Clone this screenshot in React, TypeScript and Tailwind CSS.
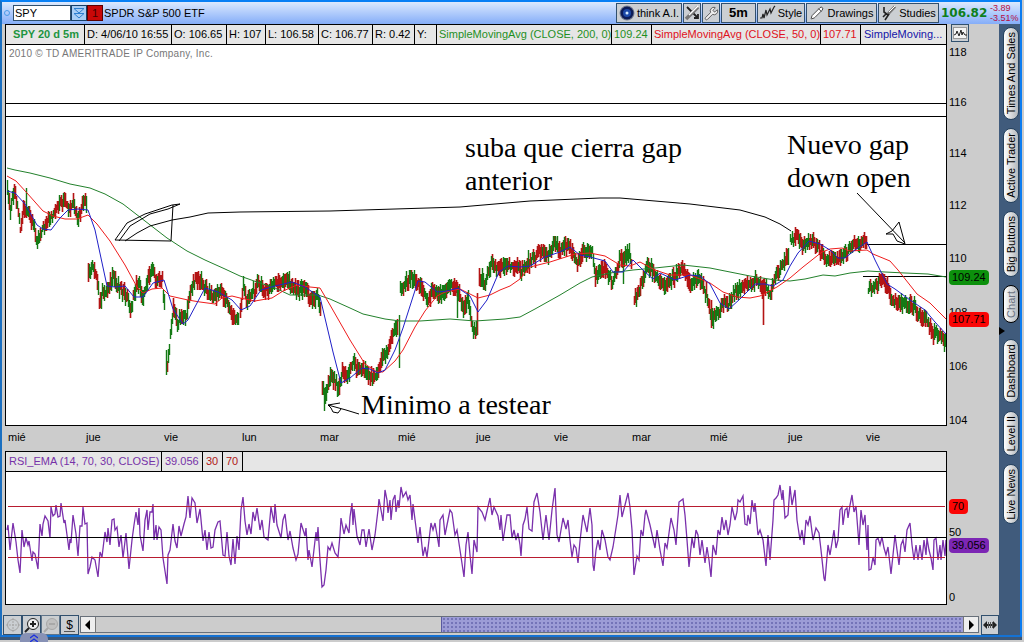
import React from 'react';
import { Pencil, Wrench } from 'lucide-react';

type Point = [number, number];

// Each session is its own list, so the overnight gaps stay open
const SESSIONS: Point[][] = [
  [[7, 191], [10, 208], [14, 189], [17, 205], [20, 228], [23, 210], [30, 217], [37, 241], [42, 229], [50, 220], [57, 206], [65, 200], [68, 211], [73, 204], [78, 219], [85, 200], [87, 208]],
  [[88, 272], [92, 266], [96, 273], [99, 303], [102, 295], [108, 287], [113, 278], [120, 288], [128, 299], [130, 312], [137, 282], [143, 297], [147, 279], [152, 270], [157, 280], [162, 281], [165, 316]],
  [[167, 366], [170, 338], [173, 306], [177, 323], [182, 314], [185, 319], [190, 293], [195, 278], [202, 284], [212, 297], [220, 290], [227, 303], [235, 321], [239, 316]],
  [[240, 312], [243, 287], [247, 301], [258, 283], [267, 292], [275, 281], [280, 284], [287, 280], [297, 290], [305, 287], [312, 301], [318, 297], [321, 314]],
  [[322, 388], [325, 396], [330, 375], [334, 380], [338, 387], [342, 371], [347, 377], [353, 362], [360, 370], [373, 377], [378, 370], [383, 357], [390, 343], [398, 322]],
  [[400, 292], [407, 281], [414, 277], [420, 287], [427, 299], [433, 291], [438, 295], [452, 284], [458, 292], [463, 308], [468, 300], [473, 332], [477, 325]],
  [[479, 277], [485, 283], [491, 263], [497, 267], [503, 268], [508, 264], [522, 270], [528, 263], [537, 253], [548, 255], [555, 242], [560, 250], [565, 243], [572, 252], [577, 263], [583, 253], [592, 252], [595, 275], [602, 267], [612, 281], [620, 260], [623, 263], [629, 249], [632, 268]],
  [[634, 299], [638, 294], [647, 265], [655, 275], [664, 286], [673, 277], [682, 267], [690, 286], [697, 277], [702, 283], [707, 297], [711, 315]],
  [[712, 318], [717, 314], [723, 302], [728, 305], [733, 295], [742, 285], [750, 285], [757, 281], [763, 288], [770, 292], [775, 277], [782, 265], [788, 258]],
  [[790, 240], [796, 235], [803, 247], [809, 240], [818, 246], [825, 261], [830, 258], [838, 260], [847, 252], [853, 244], [858, 246], [863, 239], [867, 243]],
  [[868, 291], [873, 287], [881, 279], [887, 287], [892, 300], [900, 305], [910, 304], [920, 315], [928, 322], [933, 335], [938, 333], [946, 343]],
];

// Single prints that stick out far from the body of the session
const SPIKES: { x: number; from: number; to: number; up: boolean }[] = [
  { x: 26, from: 188, to: 215, up: true },
  { x: 324, from: 390, to: 411, up: true },
  { x: 166, from: 350, to: 375, up: true },
  { x: 399, from: 315, to: 368, up: true },
  { x: 457, from: 290, to: 318, up: true },
  { x: 477, from: 293, to: 335, up: false },
  { x: 555, from: 236, to: 248, up: true },
  { x: 595, from: 268, to: 286, up: false },
  { x: 623, from: 258, to: 284, up: true },
  { x: 711, from: 300, to: 328, up: false },
  { x: 763, from: 288, to: 325, up: false },
  { x: 788, from: 248, to: 265, up: true },
];

const SMA_200 = '7,168 15,170 30,173 50,178 70,184 90,188 105,194 123,204 145,221 167,238 187,251 205,260 225,269 240,276 257,282 275,288 290,295 318,295 330,299 350,308 363,314 385,319 400,321 420,321 450,319 475,321 505,319 520,317 535,309 560,295 580,283 592,277 610,273 633,270 655,268 683,265 710,268 730,272 750,276 775,280 790,281 805,279 823,275 835,276 850,273 868,271 885,272 905,273 928,274 946,277';
const SMA_50 = '7,176 16,181 27,193 43,211 53,216 65,219 77,219 88,215 97,224 110,241 125,265 137,287 143,293 152,289 162,288 170,296 188,300 200,302 215,304 222,298 232,296 240,298 255,301 272,298 283,291 297,285 310,287 320,288 330,305 350,340 365,364 377,372 383,372 395,361 403,350 415,327 425,311 437,296 445,292 460,289 478,298 490,295 500,290 510,286 520,279 530,267 550,262 575,254 590,253 605,256 620,265 630,266 640,262 655,270 670,275 690,275 710,283 723,292 737,297 750,298 760,296 777,287 790,278 803,267 822,252 830,249 842,248 850,251 867,250 873,254 890,261 898,270 917,294 930,303 946,319';
const SMA_20 = '7,191 15,193 25,204 37,225 43,229 51,230 60,218 68,210 78,209 88,210 95,230 107,286 115,287 125,286 134,297 143,297 153,283 164,280 173,309 183,324 188,320 205,288 218,292 232,300 241,310 250,306 261,290 275,286 292,282 305,287 320,297 333,352 341,383 350,378 362,368 370,369 378,373 385,370 395,350 403,328 418,281 425,282 437,292 447,291 458,288 470,296 478,312 487,300 499,272 508,266 520,267 530,266 545,257 560,252 570,247 580,255 590,257 605,261 613,272 623,272 633,260 645,272 653,279 660,273 675,280 690,275 700,276 710,284 720,303 729,309 740,299 755,284 765,284 773,286 783,280 790,266 798,253 809,241 820,244 830,250 838,258 845,258 855,250 867,242 875,260 887,284 895,289 910,300 925,310 935,322 946,334';

const RSI = '7,530 8,525 10,550 13,523 16,542 18,560 20,573 22,530 24,547 26,538 28,545 29,541 32,561 33,552 35,554 38,569 40,524 42,536 43,524 45,516 48,521 50,538 51,507 53,516 55,514 56,505 58,517 60,516 61,503 64,523 65,520 69,550 70,539 71,543 73,515 76,534 78,556 80,526 82,526 83,507 85,524 87,523 88,574 90,567 92,557 95,560 98,577 100,552 102,557 105,532 107,542 108,528 110,545 112,520 114,519 115,530 117,527 119,547 121,535 123,558 126,533 129,569 132,540 134,525 136,512 138,525 139,508 140,535 143,551 145,520 147,510 148,530 150,512 152,512 153,504 154,540 156,525 157,540 159,527 161,530 163,558 167,584 168,555 170,550 173,524 175,541 177,548 179,526 181,536 184,524 186,517 188,496 190,518 192,498 195,503 197,523 200,509 203,541 205,530 207,550 209,532 211,548 213,547 215,530 218,522 220,521 223,555 225,556 227,532 229,556 231,565 233,539 235,564 237,536 239,550 241,510 243,497 245,521 247,535 249,524 251,534 253,512 255,521 257,508 260,530 262,520 264,537 268,540 271,507 274,523 275,504 277,525 281,538 283,520 285,514 288,540 290,531 293,548 296,560 298,554 301,523 305,536 306,528 308,560 309,550 312,567 316,532 317,541 318,527 320,560 322,587 324,585 326,570 328,547 330,550 332,543 335,553 338,557 340,535 341,518 344,534 346,525 349,533 350,517 352,503 353,525 354,509 357,536 360,545 362,530 364,530 366,547 369,529 372,550 375,535 378,510 379,499 381,510 383,521 385,490 387,500 388,513 390,500 391,520 393,500 395,495 396,512 398,500 399,508 401,487 403,497 406,492 408,500 410,495 412,520 413,504 418,543 420,527 423,556 425,547 427,557 431,523 433,530 435,523 437,535 439,547 440,520 443,515 445,535 448,520 450,510 452,513 455,535 457,530 460,550 464,577 466,545 468,532 470,555 472,574 474,540 477,552 478,507 482,512 485,520 487,511 490,498 492,515 494,507 498,516 500,530 501,515 503,541 507,515 510,515 512,538 514,530 516,540 518,533 520,545 521,556 523,525 525,519 527,507 529,529 532,531 534,502 537,493 540,512 543,540 546,515 549,540 552,510 555,488 557,535 559,542 563,518 566,529 568,520 570,540 572,557 574,545 576,548 578,563 580,541 583,515 587,532 590,508 592,525 593,565 594,571 596,550 598,540 600,550 602,530 605,540 608,557 610,560 613,547 616,528 618,515 620,495 622,517 625,505 628,493 630,507 632,530 634,575 637,556 639,560 641,530 643,536 645,515 646,510 650,525 655,548 657,530 660,550 663,566 665,543 667,548 671,518 674,530 676,545 679,502 683,499 685,515 687,540 689,567 692,538 694,548 696,530 698,535 700,555 702,540 705,563 707,547 709,560 711,577 713,545 716,555 718,530 720,535 722,517 724,530 726,520 728,535 730,525 732,507 735,520 737,512 738,500 740,502 743,496 745,524 747,525 748,515 750,524 752,500 754,512 755,503 758,535 760,530 763,540 766,566 768,535 770,560 773,520 774,500 776,498 778,495 780,485 782,500 783,490 785,518 788,515 790,486 792,505 795,490 797,520 800,540 802,530 804,545 806,520 808,525 810,516 813,540 816,528 819,533 821,550 824,578 825,581 828,545 830,555 834,530 836,548 838,540 840,510 842,507 843,525 845,510 847,508 848,518 850,505 852,495 854,512 856,506 859,545 861,510 863,525 865,515 867,550 868,525 869,570 871,569 873,557 875,565 876,540 878,538 880,545 882,537 884,548 886,555 888,547 891,574 893,555 895,535 897,550 899,565 901,545 903,540 905,552 907,530 910,523 912,545 914,560 916,545 918,560 920,545 922,560 924,540 926,555 927,538 929,550 931,558 933,570 934,540 936,538 938,560 940,545 941,560 943,540 945,556 946,540';

const noise = (n: number) => {
  const v = Math.sin(n * 12.9898) * 43758.5453;
  return v - Math.floor(v);
};

const buildBars = () => {
  let up = '';
  let down = '';
  SESSIONS.forEach((points) => {
    for (let i = 0; i < points.length - 1; i++) {
      const [x0, y0] = points[i];
      const [x1, y1] = points[i + 1];
      for (let x = x0; x < x1; x++) {
        const y = y0 + ((y1 - y0) * (x - x0)) / (x1 - x0) + (noise(x) - 0.5) * 6;
        const top = Math.round(y - 3 - noise(x + 7) * 7);
        const bottom = Math.round(y + 3 + noise(x + 31) * 7);
        const bar = `M${x + 0.5} ${top}V${bottom}`;
        const rising = y1 < y0 ? noise(x + 3) > 0.42 : noise(x + 3) > 0.66;
        if (rising) up += bar;
        else down += bar;
      }
    }
  });
  SPIKES.forEach((s) => {
    const bar = `M${s.x + 0.5} ${s.from}V${s.to}`;
    if (s.up) up += bar;
    else down += bar;
  });
  return { up, down };
};

const bars = buildBars();

const QUOTE_CELLS = [
  { text: 'SPY 20 d 5m', style: 'w-[79px] text-center font-bold text-[#1d9440]' },
  { text: 'D: 4/06/10 16:55', style: 'w-[87px] text-black' },
  { text: 'O: 106.65', style: 'w-[55px] text-black' },
  { text: 'H: 107', style: 'w-[39px] text-black' },
  { text: 'L: 106.58', style: 'w-[53px] text-black' },
  { text: 'C: 106.77', style: 'w-[54px] text-black' },
  { text: 'R: 0.42', style: 'w-[42px] text-black' },
  { text: 'Y:', style: 'w-[22px] text-black' },
  { text: 'SimpleMovingAvg (CLOSE, 200, 0)', style: 'w-[175px] text-[#1f8f1f]' },
  { text: '109.24', style: 'w-[40px] text-[#1f8f1f]' },
  { text: 'SimpleMovingAvg (CLOSE, 50, 0)', style: 'w-[169px] text-[#e01020]' },
  { text: '107.71', style: 'w-[40px] text-[#e01020]' },
];

// gap is the share of the log scale down to the next tick
const PRICE_TICKS = [
  { label: '118', gap: 50 },
  { label: '116', gap: 51 },
  { label: '114', gap: 52 },
  { label: '112', gap: 53 },
  { label: '110', gap: 54 },
  { label: '108', gap: 54 },
  { label: '106', gap: 56 },
];

const DAYS = ['mié', 'jue', 'vie', 'lun', 'mar', 'mié', 'jue', 'vie', 'mar', 'mié', 'jue', 'vie'];

const UPPER_TABS = [
  { label: 'Times And Sales', style: 'h-[93px]' },
  { label: 'Active Trader', style: 'h-[75px]' },
  { label: 'Big Buttons', style: 'h-[66px]' },
  { label: 'Chart', style: 'h-[38px] text-gray-500 border-black' },
];

const LOWER_TABS = [
  { label: 'Dashboard', style: 'h-[64px]' },
  { label: 'Level II', style: 'h-[45px]' },
  { label: 'Live News', style: 'h-[60px]' },
];

const ToolButton: React.FC<{ className?: string; label?: string; children: React.ReactNode }> = ({ className = '', label, children }) => (
  <button type="button" aria-label={label} className={`flex shrink-0 items-center justify-center border border-[#31506e] bg-[#cbcfd3] text-[11px] text-black ${className}`}>
    {children}
  </button>
);

const SideTab: React.FC<{ label: string; style: string }> = ({ label, style }) => (
  <button type="button" className={`flex w-4 items-center justify-center rounded-full border border-[#26425f] bg-linear-to-r from-white to-[#b4b8bc] ${style}`}>
    <span className="rotate-180 text-[11px] leading-4 whitespace-nowrap [writing-mode:vertical-rl]">{label}</span>
  </button>
);

const BrushIcon = () => (
  <svg viewBox="0 0 16 16" className="size-4" fill="none">
    <path d="M14 1.5 7 9" stroke="#777" strokeWidth="3" />
    <path d="M14 1 8 7" stroke="#fff" strokeWidth="1" />
    <path d="M3 2v5l4 3M2 12l3-3M8 9l-4 6" stroke="#222" strokeWidth="1.6" />
  </svg>
);

const TitleBar = () => (
  <header className="flex h-[22px] shrink-0 items-center bg-linear-to-b from-[#dce9fd] to-[#85adf8] pl-[2px]">
    <span className="mr-[3px] size-[6px] rounded-full border border-[#4b9be8]" />
    <input aria-label="Symbol" defaultValue="SPY" className="h-4 w-[58px] border border-[#31506e] bg-white px-px text-[11px] text-black outline-none" />
    <button type="button" aria-label="Symbol list" className="flex h-4 w-4 items-center justify-center border border-[#173f68] bg-[#a9cdf5]">
      <svg viewBox="0 0 12 12" className="size-3" fill="none" stroke="#2e7fd0">
        <path d="M1 1.5h10L6 6zM1 6.5h10L6 11z" />
      </svg>
    </button>
    <button type="button" className="h-4 w-4 border border-[#5a0000] bg-[#c80808] text-[11px] leading-3 text-[#400]">1</button>
    <h1 className="ml-px flex-1 text-[11px] whitespace-nowrap text-black">SPDR S&amp;P 500 ETF</h1>
    <div className="flex h-5 gap-px">
      <ToolButton className="w-[66px] gap-[2px]">
        <svg viewBox="0 0 16 16" className="size-4">
          <circle cx="8" cy="8" r="7.5" fill="#777f90" />
          <circle cx="8" cy="8" r="6.5" fill="#0c1c58" />
          <circle cx="8" cy="8" r="4" fill="#1d49a8" />
          <circle cx="8" cy="8" r="1.5" fill="#d5ecff" />
        </svg>
        <span className="whitespace-nowrap">think A.I.</span>
      </ToolButton>
      <ToolButton className="w-[18px]" label="Tools">
        <svg viewBox="0 0 16 16" className="size-4" fill="none">
          <path d="M3 2l10 10M10 13h4v-4" stroke="#222" strokeWidth="1.8" />
          <path d="M14 2 2 14" stroke="#777" strokeWidth="3.5" />
          <path d="M14 1 5 10" stroke="#fff" strokeWidth="1.5" />
        </svg>
      </ToolButton>
      <ToolButton className="w-[18px]" label="Settings">
        <Wrench size={15} color="#555" fill="#eee" strokeWidth={1.5} />
      </ToolButton>
      <ToolButton className="w-[35px] font-bold"><span className="text-[13px]">5m</span></ToolButton>
      <ToolButton className="w-[48px] gap-[2px]">
        <svg viewBox="0 0 16 16" className="size-4" fill="none" stroke="#222" strokeWidth="1.2">
          <path d="M0 13h2l1-4 1 4 2-8 1 5 3-6 1 4 3-6 1-1" />
        </svg>
        <span>Style</span>
      </ToolButton>
      <ToolButton className="w-[71px] gap-1">
        <Pencil size={14} color="#333" fill="#fff" strokeWidth={1.5} />
        <span>Drawings</span>
      </ToolButton>
      <ToolButton className="w-[61px] gap-[2px]">
        <BrushIcon />
        <span>Studies</span>
      </ToolButton>
    </div>
    <strong className="ml-[2px] w-[49px] font-['DejaVu_Sans','Liberation_Sans',sans-serif] text-xs text-[#0d7f1c]">106.82</strong>
    <div className="w-[30px] text-[9px] leading-[10px] whitespace-nowrap text-[#b80c42]">
      <p>-3.89</p>
      <p>-3.51%</p>
    </div>
  </header>
);

const PriceChart = () => (
  <section className="flex min-h-0 flex-1">
    <div className="flex min-w-0 flex-1 flex-col border border-black bg-white">
      <div className="flex h-5 shrink-0 border-b border-black bg-[#e6e6e6] text-[11px] leading-[19px]">
        {QUOTE_CELLS.map((cell) => (
          <div key={cell.text} className={`shrink-0 border-r border-black pl-[2px] whitespace-nowrap ${cell.style}`}>{cell.text}</div>
        ))}
        <div className="min-w-0 flex-1 truncate pl-[3px] text-[#1414a8]">SimpleMoving...</div>
      </div>
      <div className="relative min-h-0 flex-1 overflow-hidden">
        <svg viewBox="6 45 940 380" preserveAspectRatio="none" className="block size-full" fill="none">
          <g stroke="#000" shapeRendering="crispEdges">
            <path d="M6 103.5H946M6 116.5H946M867 244.5H946M863 276.5H946" />
          </g>
          <path d={bars.down} stroke="#b41414" strokeWidth="1.6" />
          <path d={bars.up} stroke="#147a14" strokeWidth="1.4" />
          <polyline points={SMA_200} stroke="#23812c" />
          <polyline points={SMA_50} stroke="#ee1c1c" />
          <polyline points={SMA_20} stroke="#2020c8" />
          <g stroke="#000">
            <path d="M180 204l-8 1-27 9-18 9-12 17 56 1 2-36M180 204l-12 5-18 5-20 12-11 15" />
            <path d="M125 241l12-8 13-7 22-6 18-3 18-4 32-1 90-1 130-4 70-6 70-3h20l70 6 50 6 25 7 15 7 11 7" />
            <path d="M857 193l48 50M886 234l6-3 7-9 6 22-8-3-4-7h-7" />
            <path d="M359 414l-13-4-18-5 12-2M328 405l3 3 2 4 5 1 3-4" />
          </g>
        </svg>
        <p className="absolute top-px left-[3px] text-[10px] tracking-wide text-[#777]">2010 © TD AMERITRADE IP Company, Inc.</p>
        <div className="absolute inset-0 font-['Liberation_Serif',serif] text-[28px] leading-[33px] whitespace-nowrap text-black">
          <p className="absolute top-[86px] left-[459px]">suba que cierra gap<br />anterior</p>
          <p className="absolute top-[83px] left-[781px]">Nuevo gap<br />down open</p>
          <p className="absolute top-[343px] left-[355px]">Minimo a testear</p>
        </div>
      </div>
    </div>
    <div className="relative flex w-[52px] shrink-0 flex-col text-[11px] leading-4 text-black">
      <ToolButton className="ml-1 h-[18px] w-[18px]" label="Chart settings">
        <svg viewBox="0 0 16 16" className="size-4" fill="none" stroke="#222">
          <rect x="1.500" y="2.500" width="13" height="11" fill="#f5f5f5" stroke="#999" />
          <path d="M2 10l2-1 1-3 2 5 2-6 1 5 1-3 2 3h2" />
        </svg>
      </ToolButton>
      <ol className="flex min-h-0 flex-1 flex-col pt-[2px] pl-[2px]">
        {PRICE_TICKS.map((tick) => (
          <li key={tick.label} className="min-h-0 basis-0" style={{ flexGrow: tick.gap }}>{tick.label}</li>
        ))}
        <li className="h-3 leading-3">104</li>
      </ol>
      <span className="absolute top-[246px] left-[2px] w-10 rounded bg-[#0c900c] px-[3px] leading-[15px]">109.24</span>
      <span className="absolute top-[288px] left-[2px] w-10 rounded bg-[#fa0505] px-[3px] leading-[15px]">107.71</span>
    </div>
  </section>
);

const RsiChart = () => (
  <section className="flex h-[154px] shrink-0">
    <div className="flex min-w-0 flex-1 flex-col border border-black bg-white">
      <div className="flex h-5 shrink-0 border-b border-black bg-[#e6e6e6] text-[11px] leading-[19px]">
        <div className="w-[156px] border-r border-black pl-[3px] whitespace-nowrap text-[#7632a8]">RSI_EMA (14, 70, 30, CLOSE)</div>
        <div className="w-[41px] border-r border-black pl-[3px] text-[#7632a8]">39.056</div>
        <div className="w-5 border-r border-black pl-[3px] text-[#b01818]">30</div>
        <div className="w-5 border-r border-black pl-[3px] text-[#b01818]">70</div>
      </div>
      <svg viewBox="6 472 940 132" preserveAspectRatio="none" className="block min-h-0 w-full flex-1" fill="none">
        <polyline points={RSI} stroke="#7a30ac" strokeWidth="1.3" />
        <g shapeRendering="crispEdges">
          <path d="M8 506.500H945M8 557.500H945" stroke="#b81c30" />
          <path d="M6 537.500H946" stroke="#000" />
        </g>
      </svg>
    </div>
    <div className="flex w-[52px] shrink-0 flex-col items-start pt-12 pl-[2px] text-[11px] text-black">
      <span className="w-[19px] rounded bg-[#fa0505] px-[3px] leading-[15px]">70</span>
      <span className="mt-3 leading-3">50</span>
      <span className="w-10 rounded bg-[#7c26b4] px-[3px] leading-[15px]">39.056</span>
      <span className="mt-auto leading-4">0</span>
    </div>
  </section>
);

const BottomBar = () => (
  <footer className="mt-[10px] flex h-5 shrink-0 items-stretch">
    <div className="-ml-[2px] flex">
      <ToolButton className="w-[19px]" label="Crosshair">
        <svg viewBox="0 0 16 16" className="size-4" fill="none" stroke="#a5a5a5">
          <circle cx="8" cy="8" r="5.500" />
          <path d="M8 1v14M1 8h14" strokeDasharray="2 1" />
        </svg>
      </ToolButton>
      <ToolButton className="w-[19px]" label="Zoom in">
        <svg viewBox="0 0 16 16" className="size-4" fill="none" stroke="#222">
          <circle cx="9" cy="7" r="5.500" fill="#eee" />
          <path d="M9 4v6M6 7h6M5 11l-4 4" strokeWidth="2" />
        </svg>
      </ToolButton>
      <ToolButton className="w-[19px] opacity-70" label="Zoom out">
        <svg viewBox="0 0 16 16" className="size-4" fill="none" stroke="#999">
          <circle cx="9" cy="7" r="5.500" fill="#bbb" />
          <path d="M6 7h6M5 11l-4 4" strokeWidth="2" />
        </svg>
      </ToolButton>
      <ToolButton className="w-[19px]"><span className="border-b border-[#555] px-[2px] text-xs leading-3">$</span></ToolButton>
    </div>
    <div className="mt-px ml-px flex h-[17px] min-w-0 flex-1 border border-[#68707a] bg-[#ccc]">
      <button type="button" aria-label="Scroll left" className="flex w-[15px] items-center justify-center border-r border-[#777] bg-[#eee]">
        <svg viewBox="0 0 6 10" className="h-[10px] w-[6px]"><path d="M5 0v10L0 5z" /></svg>
      </button>
      <div className="grow-[345] basis-0" />
      <div className="grow-[522] basis-0 border-l border-[#5a5aa0] bg-[#9c9cd6] bg-[radial-gradient(#7474b8_1px,transparent_1px)] bg-[size:4px_4px]" />
      <button type="button" aria-label="Scroll right" className="flex w-[15px] items-center justify-center border-l border-[#777] bg-[#eee]">
        <svg viewBox="0 0 6 10" className="h-[10px] w-[6px]"><path d="M1 0v10l5-5z" /></svg>
      </button>
    </div>
    <ToolButton className="ml-[2px] w-[18px]" label="Fit width">
      <svg viewBox="0 0 16 16" className="size-4">
        <path d="M1 8l4-4v3h6V4l4 4-4 4V9H5v3z" fill="#222" />
        <path d="M6.500 5v6M8.500 5v6M10.500 5v6" stroke="#555" />
      </svg>
    </ToolButton>
  </footer>
);

const App: React.FC = () => {
  return (
    <div className="relative flex h-screen min-h-[480px] flex-col bg-[#ccc] pr-[2px] pb-[2px] font-['Liberation_Sans',Arial,sans-serif]">
      <div className="flex min-h-0 flex-1 flex-col border-b-[3px] border-[#3d5878]">
        <div className="flex min-h-0 flex-1 flex-col border-2 border-t-[#0880f5] border-r-[#0c7cf0] border-b-[#1472d4] border-l-[#1b6fc0]">
          <TitleBar />
          <div className="flex min-h-0 flex-1">
            <main className="flex min-w-0 flex-1 flex-col pl-[3px]">
              <PriceChart />
              <div className="grid h-[25px] shrink-0 grid-cols-12 pr-[55px] pl-[3px] text-[11px] leading-[22px] text-black">
                {DAYS.map((day, i) => <span key={i}>{day}</span>)}
              </div>
              <RsiChart />
              <BottomBar />
            </main>
            <nav className="relative flex w-[21px] shrink-0 flex-col items-center gap-2 bg-[#405b7c] pt-[3px] pl-[2px]">
              {UPPER_TABS.map((tab) => <SideTab key={tab.label} {...tab} />)}
              <svg viewBox="0 0 6 8" className="absolute top-[303px] left-0 h-2 w-[6px]"><path d="M0 0v8l6-4z" /></svg>
              <div className="h-0" />
              {LOWER_TABS.map((tab) => <SideTab key={tab.label} {...tab} />)}
            </nav>
          </div>
        </div>
      </div>
      <button type="button" aria-label="Expand" className="absolute bottom-0 left-5 flex h-[9px] w-7 items-center justify-center rounded-t-md bg-[#8791b5]">
        <svg viewBox="0 0 8 8" className="size-2" fill="none" stroke="#1a2ee0" strokeWidth="1.3"><path d="M0 4l4-3 4 3M0 8l4-3 4 3" /></svg>
      </button>
    </div>
  );
};

export default App;
